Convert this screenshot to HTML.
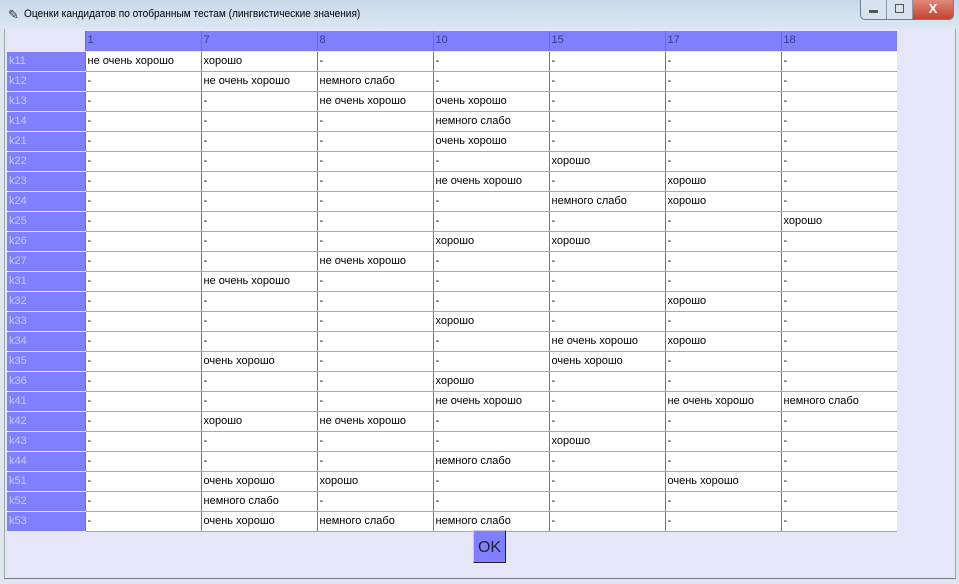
<!DOCTYPE html>
<html><head><meta charset="utf-8"><style>
body{margin:0;width:959px;height:584px;overflow:hidden;background:#dfe6f0;font-family:"Liberation Sans",sans-serif;position:relative}
.title{position:absolute;left:0;top:0;width:959px;height:30px;background:linear-gradient(#c9d9ea,#dce7f2)}
.title span{position:absolute;left:24px;top:8px;font-size:11px;color:#000;transform:scaleX(0.92);transform-origin:left}
.ico{position:absolute;left:8px;top:7px;font-size:13px;color:#333}
.btns{position:absolute;left:860px;top:0;height:19px;width:92px;border:1px solid #6b7b90;border-top:none;border-radius:0 0 5px 5px;overflow:hidden;background:#d8e3ef}
.b1,.b2{position:absolute;top:0;width:25px;height:19px;border-right:1px solid #8a98aa}
.b1{left:0}.b2{left:26px}
.b1:after{content:"";position:absolute;left:8px;top:10px;width:9px;height:3px;background:#555}
.b2:after{content:"";position:absolute;left:8px;top:4px;width:7px;height:7px;border:1px solid #555}
.cl{position:absolute;left:52px;top:0;width:40px;height:19px;background:linear-gradient(#e08a7a,#c84030);color:#fff;font-weight:bold;font-size:13px;text-align:center;line-height:18px}
.win{position:absolute;left:4px;top:29px;width:950px;height:549px;background:#e6e6f8;border-left:1px solid #9aa;border-right:1px solid #9aa;border-bottom:1px solid #778}
table{position:absolute;left:7px;top:31px;border-collapse:collapse;table-layout:fixed}
td{height:19.9px;padding:0 0 0 2px;font-size:11px;line-height:19px;white-space:nowrap;overflow:hidden;background:#fff;border-left:1px solid #777;border-bottom:1px solid #aaa;color:#000;box-sizing:border-box;width:116px}
td.l{width:78px;background:#8080ff;color:#c8c8ff;border-left:none;border-bottom:1px solid #e6e6f8}
tr.h td{background:#8080ff;color:#3a3a90;border-bottom:1px solid #e6e6f8;height:20px}
tr.h td.c0{background:#e6e6f8}
.ok{position:absolute;left:473px;top:530px;width:33px;height:33px;background:#8080ff;border:1px solid #222;border-top-color:#ccd;border-left-color:#ccd;font-size:16px;color:#223;text-align:center;line-height:33px;box-sizing:border-box}
</style></head><body>
<div class="title"><div class="ico">✎</div><span>Оценки кандидатов по отобранным тестам (лингвистические значения)</span>
<div class="btns"><div class="b1"></div><div class="b2"></div><div class="cl">X</div></div></div>
<div class="win"></div>
<table>
<tr class="h"><td class="l c0"></td><td>1</td><td>7</td><td>8</td><td>10</td><td>15</td><td>17</td><td>18</td></tr>
<tr><td class="l">k11</td><td>не очень хорошо</td><td>хорошо</td><td>-</td><td>-</td><td>-</td><td>-</td><td>-</td></tr>
<tr><td class="l">k12</td><td>-</td><td>не очень хорошо</td><td>немного слабо</td><td>-</td><td>-</td><td>-</td><td>-</td></tr>
<tr><td class="l">k13</td><td>-</td><td>-</td><td>не очень хорошо</td><td>очень хорошо</td><td>-</td><td>-</td><td>-</td></tr>
<tr><td class="l">k14</td><td>-</td><td>-</td><td>-</td><td>немного слабо</td><td>-</td><td>-</td><td>-</td></tr>
<tr><td class="l">k21</td><td>-</td><td>-</td><td>-</td><td>очень хорошо</td><td>-</td><td>-</td><td>-</td></tr>
<tr><td class="l">k22</td><td>-</td><td>-</td><td>-</td><td>-</td><td>хорошо</td><td>-</td><td>-</td></tr>
<tr><td class="l">k23</td><td>-</td><td>-</td><td>-</td><td>не очень хорошо</td><td>-</td><td>хорошо</td><td>-</td></tr>
<tr><td class="l">k24</td><td>-</td><td>-</td><td>-</td><td>-</td><td>немного слабо</td><td>хорошо</td><td>-</td></tr>
<tr><td class="l">k25</td><td>-</td><td>-</td><td>-</td><td>-</td><td>-</td><td>-</td><td>хорошо</td></tr>
<tr><td class="l">k26</td><td>-</td><td>-</td><td>-</td><td>хорошо</td><td>хорошо</td><td>-</td><td>-</td></tr>
<tr><td class="l">k27</td><td>-</td><td>-</td><td>не очень хорошо</td><td>-</td><td>-</td><td>-</td><td>-</td></tr>
<tr><td class="l">k31</td><td>-</td><td>не очень хорошо</td><td>-</td><td>-</td><td>-</td><td>-</td><td>-</td></tr>
<tr><td class="l">k32</td><td>-</td><td>-</td><td>-</td><td>-</td><td>-</td><td>хорошо</td><td>-</td></tr>
<tr><td class="l">k33</td><td>-</td><td>-</td><td>-</td><td>хорошо</td><td>-</td><td>-</td><td>-</td></tr>
<tr><td class="l">k34</td><td>-</td><td>-</td><td>-</td><td>-</td><td>не очень хорошо</td><td>хорошо</td><td>-</td></tr>
<tr><td class="l">k35</td><td>-</td><td>очень хорошо</td><td>-</td><td>-</td><td>очень хорошо</td><td>-</td><td>-</td></tr>
<tr><td class="l">k36</td><td>-</td><td>-</td><td>-</td><td>хорошо</td><td>-</td><td>-</td><td>-</td></tr>
<tr><td class="l">k41</td><td>-</td><td>-</td><td>-</td><td>не очень хорошо</td><td>-</td><td>не очень хорошо</td><td>немного слабо</td></tr>
<tr><td class="l">k42</td><td>-</td><td>хорошо</td><td>не очень хорошо</td><td>-</td><td>-</td><td>-</td><td>-</td></tr>
<tr><td class="l">k43</td><td>-</td><td>-</td><td>-</td><td>-</td><td>хорошо</td><td>-</td><td>-</td></tr>
<tr><td class="l">k44</td><td>-</td><td>-</td><td>-</td><td>немного слабо</td><td>-</td><td>-</td><td>-</td></tr>
<tr><td class="l">k51</td><td>-</td><td>очень хорошо</td><td>хорошо</td><td>-</td><td>-</td><td>очень хорошо</td><td>-</td></tr>
<tr><td class="l">k52</td><td>-</td><td>немного слабо</td><td>-</td><td>-</td><td>-</td><td>-</td><td>-</td></tr>
<tr><td class="l">k53</td><td>-</td><td>очень хорошо</td><td>немного слабо</td><td>немного слабо</td><td>-</td><td>-</td><td>-</td></tr>
</table>
<div class="ok">OK</div>
</body></html>
